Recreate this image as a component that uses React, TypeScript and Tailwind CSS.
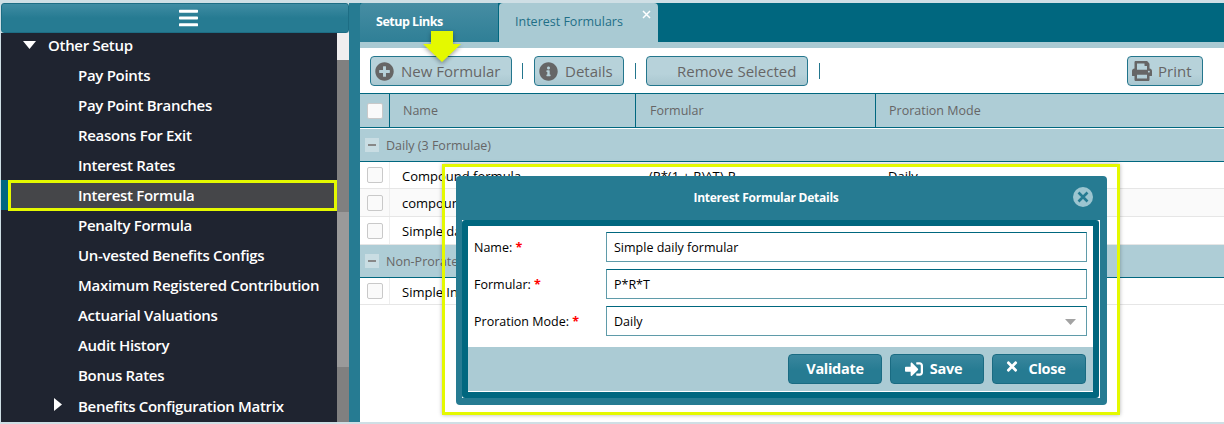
import { FaBars, FaInfoCircle, FaPlusCircle, FaPrint, FaSignInAlt, FaTimes } from "react-icons/fa";
import type { ReactNode } from "react";

const MENU = [
  "Pay Points",
  "Pay Point Branches",
  "Reasons For Exit",
  "Interest Rates",
  "Interest Formula",
  "Penalty Formula",
  "Un-vested Benefits Configs",
  "Maximum Registered Contribution",
  "Actuarial Valuations",
  "Audit History",
  "Bonus Rates",
];

const Sidebar = () => (
  <aside className="flex w-[348px] shrink-0 flex-col">
    <div className="flex h-[30px] shrink-0 items-center justify-center rounded-[3px] border border-[#1d6d84] bg-[linear-gradient(#3f8ca3,#267b92_50%)] pl-[26px] text-white">
      <FaBars className="h-[22px] w-[19px]" />
    </div>
    <div className="flex h-[389px] shrink-0 overflow-hidden">
      <nav className="-mt-[3px] w-[336px] shrink-0 bg-[#1f2430] text-[15px] font-semibold tracking-[-0.3px] text-white">
        <div className="flex h-[30px] items-center pl-[22px]">
          <svg width="13" height="8" viewBox="0 0 13 8" className="mr-[12px]">
            <path d="M0 0h13L6.5 8z" fill="#fff" />
          </svg>
          Other Setup
        </div>
        {MENU.map((item) =>
          item === "Interest Formula" ? (
            <div key={item} className="flex h-[30px] bg-[#006680] pl-[7px]">
              <div className="flex h-[31px] flex-1 items-center border-[3px] border-[#e4f900] bg-[#454649] pl-[67px]">
                {item}
              </div>
            </div>
          ) : (
            <div key={item} className="flex h-[30px] items-center pl-[77px]">
              {item}
            </div>
          ),
        )}
        <div className="flex h-[33px] items-start pl-[53px] pt-[5px]">
          <svg width="8" height="13" viewBox="0 0 8 13" className="mr-[16px] mt-[3px]">
            <path d="M0 0l8 6.5L0 13z" fill="#fff" />
          </svg>
          Benefits Configuration Matrix
        </div>
      </nav>
      <div className="flex w-[12px] shrink-0 flex-col">
        <div className="h-[27px] bg-[#efefef]" />
        <div className="h-[152px] bg-[#808080]" />
        <div className="h-[155px] bg-[#9a9a9a]" />
        <div className="flex-1 bg-[#808080]" />
      </div>
    </div>
  </aside>
);

const ToolButton = ({ icon, label, className }: { icon?: ReactNode; label: string; className: string }) => (
  <button
    className={`flex h-[30px] items-center rounded-[4px] border border-[#23768d] bg-[linear-gradient(#b7d2da,#b7d2da_60%,#a9c7d0)] text-[15px] text-[#666] ${className}`}
  >
    {icon}
    {label}
  </button>
);

const Divider = ({ className }: { className: string }) => <div className={`mt-[7px] h-[16px] w-px bg-[#23768d] ${className}`} />;

const Box = () => (
  <div className="flex w-[29px] shrink-0 items-center justify-center">
    <div className="h-[16px] w-[16px] rounded-[2px] border border-[#c9c9c9] bg-[#fafafa]" />
  </div>
);

const Row = ({ name, formular, mode, className }: { name: string; formular?: string; mode?: string; className: string }) => (
  <div className={`flex items-center border-b border-[#e6e6e6] text-[13px] text-black ${className}`}>
    <Box />
    <div className="flex h-full w-[246px] items-center border-l border-[#eee] pl-[12px] pt-[3px]">{name}</div>
    <div className="w-[240px] pl-[14px] pt-[3px]">{formular}</div>
    <div className="pl-[13px] pt-[3px]">{mode}</div>
  </div>
);

const Group = ({ label }: { label: string }) => (
  <div className="flex h-[33px] items-center border-b border-[#00677f] bg-[#aecdd6] pl-[5px] text-[12.5px] text-[#666]">
    <div className="mr-[7px] flex h-[14px] w-[14px] items-center justify-center bg-[#c9dde3]">
      <div className="h-[2px] w-[8px] bg-[#888]" />
    </div>
    <span className="pt-[2px]">{label}</span>
  </div>
);

const Main = () => (
  <main className="flex-1 bg-white">
    <div className="flex h-[39px] items-stretch bg-[#00677f]">
      <div className="flex w-[138px] items-center rounded-tl-[3px] bg-[linear-gradient(#468da3,#2f7f96)] pb-[1px] pl-[16px] text-[12.5px] font-bold tracking-[-0.5px] text-white">
        Setup Links
      </div>
      <div className="relative ml-px flex w-[159px] items-center rounded-t-[4px] bg-[#a9cad3] pl-[16px] text-[12.5px] text-[#1f6f87]">
        Interest Formulars
        <svg width="9" height="9" viewBox="0 0 9 9" className="absolute right-[7px] top-[7px]">
          <path d="M1 1l7 7M8 1L1 8" stroke="#fff" strokeWidth="1.5" />
        </svg>
      </div>
    </div>
    <div className="h-[6px] bg-[#a9cad3]" />
    <div className="flex h-[45px] items-start pl-[10px] pr-[21px] pt-[8px]">
      <ToolButton
        className="w-[142px] pl-[4px]"
        icon={<FaPlusCircle className="mr-[7px] h-[19px] w-[19px] text-[#666]" />}
        label="New Formular"
      />
      <Divider className="ml-[10px] mr-[11px]" />
      <ToolButton
        className="w-[90px] pl-[4px]"
        icon={<FaInfoCircle className="mr-[7px] h-[19px] w-[19px] text-[#666]" />}
        label="Details"
      />
      <Divider className="ml-[11px] mr-[10px]" />
      <ToolButton className="w-[162px] pl-[30px]" label="Remove Selected" />
      <Divider className="ml-[11px] mr-[10px]" />
      <ToolButton
        className="ml-auto w-[76px] pl-[4px]"
        icon={<FaPrint className="mr-[6px] h-[20px] w-[20px] text-[#666]" />}
        label="Print"
      />
    </div>
    <div className="flex h-[35px] items-stretch border-y border-[#00677f] bg-[#aecdd6] text-[12.5px] text-[#666]">
      <Box />
      <div className="flex w-[246px] items-center border-l border-[#00677f] pl-[13px] pt-[2px]">Name</div>
      <div className="flex w-[240px] items-center border-l border-[#00677f] pl-[14px] pt-[2px]">Formular</div>
      <div className="flex flex-1 items-center border-l border-[#00677f] pl-[13px] pt-[2px]">Proration Mode</div>
    </div>
    <div className="h-px" />
    <Group label="Daily (3 Formulae)" />
    <Row className="h-[27px] bg-white" name="Compound formula" formular="(P*(1 + R)^T)-P" mode="Daily" />
    <Row className="h-[28px] bg-[#fafafa]" name="compound" />
    <Row className="h-[28px] bg-white" name="Simple daily" />
    <Group label="Non-Prorated" />
    <Row className="h-[27px] bg-white" name="Simple Interest" />
  </main>
);

const FormRow = ({ label, children }: { label: string; children: ReactNode }) => (
  <div className="flex h-[30px] items-center px-[6px] text-[12.5px] text-black">
    <div className="w-[132px] shrink-0 pt-[2px]">
      {label} <span className="font-bold text-[#f00]">*</span>
    </div>
    <div className="flex h-[30px] flex-1 items-center justify-between border border-[#5f9ba9] border-t-[#00677f] pl-[7px] pr-[10px] pt-[2px]">
      {children}
    </div>
  </div>
);

const DialogButton = ({ children, className }: { children: ReactNode; className?: string }) => (
  <button
    className={`flex h-[30px] w-[94px] items-center justify-center rounded-[4px] border border-[#1a6b82] bg-[linear-gradient(#3a879e,#267b92_55%)] text-[14.5px] font-bold tracking-[-0.3px] text-white ${className ?? ""}`}
  >
    {children}
  </button>
);

const Dialog = () => (
  <div className="absolute left-[456px] top-[176px] w-[651px] rounded-[4px] bg-[#267b92] pb-[7px] pl-[6px] pr-[7px]">
    <div className="relative flex h-[44px] items-center justify-center pr-[30px] text-[12px] font-bold tracking-[-0.25px] text-white">
      Interest Formular Details
      <svg width="20" height="20" viewBox="0 0 20 20" className="absolute right-[7px] top-[11px]">
        <circle cx="10" cy="10" r="10" fill="#9cc5d0" />
        <path d="M5.5 5.5l9 9M14.5 5.5l-9 9" stroke="#267b92" strokeWidth="2.6" />
      </svg>
    </div>
    <div className="bg-white pr-px">
      <div className="rounded-[3px] bg-[#00677f] p-[6px]">
        <div className="flex flex-col gap-[7px] bg-white pb-[11px] pt-[6px]">
          <FormRow label="Name:">Simple daily formular</FormRow>
          <FormRow label="Formular:">P*R*T</FormRow>
          <FormRow label="Proration Mode:">
            Daily
            <svg width="11" height="6" viewBox="0 0 11 6">
              <path d="M0 0h11L5.5 6z" fill="#a3a3a3" />
            </svg>
          </FormRow>
        </div>
        <div className="flex h-[45px] items-center justify-end gap-[8px] border-b border-white bg-[#abcbd4] pr-[7px]">
          <DialogButton>Validate</DialogButton>
          <DialogButton className="pr-[8px]">
            <FaSignInAlt className="mr-[6px] h-[18px] w-[20px]" />
            Save
          </DialogButton>
          <DialogButton className="pr-[8px]">
            <FaTimes className="-mt-[6px] mr-[10px] h-[15px] w-[14px]" />
            Close
          </DialogButton>
        </div>
      </div>
    </div>
  </div>
);

const App = () => (
  <div className="relative flex h-[424px] w-[1224px] flex-col overflow-hidden bg-[#cfdfe5] font-['Open_Sans',sans-serif]">
    <div className="h-[3px] shrink-0" />
    <div className="flex h-[419px] shrink-0 pl-px">
      <Sidebar />
      <div className="w-[11px] shrink-0 bg-[#267b92]" />
      <Main />
    </div>

    {/* callouts painted over the screenshot */}
    <Dialog />
    <div className="absolute left-[442px] top-[164px] h-[251px] w-[678px] border-[3px] border-[#e4f900] shadow-[0_0_4px_rgba(0,0,0,0.3)]" />
    <svg
      width="42"
      height="34"
      viewBox="0 0 42 34"
      className="absolute left-[421px] top-[30px] drop-shadow-[0_2px_2px_rgba(0,0,0,0.35)]"
    >
      <path d="M10 1h22v13h8L21 32 2 14h8z" fill="#e4f900" />
    </svg>
  </div>
);

export default App;
